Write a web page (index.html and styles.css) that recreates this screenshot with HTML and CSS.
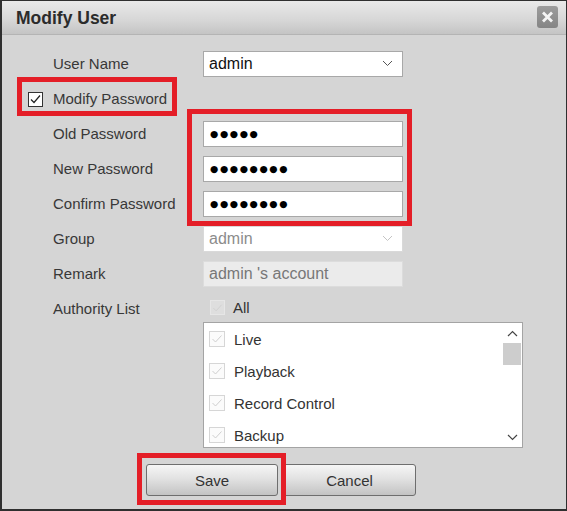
FILE: index.html
```html
<!DOCTYPE html>
<html>
<head>
<meta charset="utf-8">
<link rel="stylesheet" href="styles.css">
</head>
<body>
<div class="frame">
  <div class="dialog">
    <div class="titlebar">
      <span class="title">Modify User</span>
      <span class="close"><svg width="21" height="22" viewBox="0 0 21 22"><path d="M6 6.5 L15 15.5 M15 6.5 L6 15.5" stroke="#f4f4f4" stroke-width="2.8" stroke-linecap="butt"/></svg></span>
    </div>
    <div class="body">
      <div class="form">
        <div class="cbcell"></div>
        <div class="label">User Name</div>
        <div class="field"><div class="input select">admin<svg class="chev" width="11" height="7" viewBox="0 0 11 7"><path d="M1 1 L5.5 5.5 L10 1" fill="none" stroke="#555" stroke-width="1"/></svg></div></div>

        <div class="cbcell"><span class="cb on"><svg width="13" height="13" viewBox="0 0 13 13"><path d="M2 6.5 L5 9.5 L11 2.5" fill="none" stroke="#222" stroke-width="1.2"/></svg></span></div>
        <div class="label">Modify Password</div>
        <div class="field"></div>

        <div class="cbcell"></div>
        <div class="label">Old Password</div>
        <div class="field"><div class="input pw">●●●●●</div></div>

        <div class="cbcell"></div>
        <div class="label">New Password</div>
        <div class="field"><div class="input pw">●●●●●●●●</div></div>

        <div class="cbcell"></div>
        <div class="label">Confirm Password</div>
        <div class="field"><div class="input pw">●●●●●●●●</div></div>

        <div class="cbcell"></div>
        <div class="label">Group</div>
        <div class="field"><div class="input select dis">admin<svg class="chev" width="11" height="7" viewBox="0 0 11 7"><path d="M1 1 L5.5 5.5 L10 1" fill="none" stroke="#c4c4c4" stroke-width="1"/></svg></div></div>

        <div class="cbcell"></div>
        <div class="label">Remark</div>
        <div class="field"><div class="input ro">admin 's account</div></div>

        <div class="cbcell"></div>
        <div class="label auth">Authority List</div>
        <div class="authcell">
          <div class="allrow"><span class="cb dcb"><svg width="14" height="14" viewBox="0 0 14 14"><path d="M2.5 7 L5.5 10 L11.5 3.5" fill="none" stroke="#cfcfcf" stroke-width="1"/></svg></span><span>All</span></div>
          <div class="listbox">
            <div class="items">
              <div class="item"><span class="cb dcb"><svg width="14" height="14" viewBox="0 0 14 14"><path d="M2.5 7 L5.5 10 L11.5 3.5" fill="none" stroke="#cfcfcf" stroke-width="1"/></svg></span>Live</div>
              <div class="item"><span class="cb dcb"><svg width="14" height="14" viewBox="0 0 14 14"><path d="M2.5 7 L5.5 10 L11.5 3.5" fill="none" stroke="#cfcfcf" stroke-width="1"/></svg></span>Playback</div>
              <div class="item"><span class="cb dcb"><svg width="14" height="14" viewBox="0 0 14 14"><path d="M2.5 7 L5.5 10 L11.5 3.5" fill="none" stroke="#cfcfcf" stroke-width="1"/></svg></span>Record Control</div>
              <div class="item"><span class="cb dcb"><svg width="14" height="14" viewBox="0 0 14 14"><path d="M2.5 7 L5.5 10 L11.5 3.5" fill="none" stroke="#cfcfcf" stroke-width="1"/></svg></span>Backup</div>
            </div>
            <div class="scrollbar">
              <div class="arrow"><svg width="11" height="7" viewBox="0 0 11 7"><path d="M1 6 L5.5 1.5 L10 6" fill="none" stroke="#444" stroke-width="1.2"/></svg></div>
              <div class="track"><div class="thumb"></div></div>
              <div class="arrow"><svg width="11" height="7" viewBox="0 0 11 7"><path d="M1 1 L5.5 5.5 L10 1" fill="none" stroke="#444" stroke-width="1.2"/></svg></div>
            </div>
          </div>
        </div>
      </div>
      <div class="buttons">
        <div class="btn">Save</div>
        <div class="btn">Cancel</div>
      </div>
    </div>
    <div class="mark m1"></div>
    <div class="mark m2"></div>
    <div class="mark m3"></div>
  </div>
</div>
</body>
</html>
```
FILE: styles.css
```css
* { box-sizing: border-box; }
html, body { margin: 0; padding: 0; }
body {
  width: 567px;
  height: 511px;
  overflow: hidden;
  font-family: "Liberation Sans", Arial, sans-serif;
  color: #333;
}
.frame {
  width: 567px;
  height: 511px;
  background: #2f2f2f;
  padding: 1px 1px 2px 2px;
}
.dialog {
  position: relative;
  width: 564px;
  height: 508px;
  background: #d5d5d5;
}
.titlebar {
  height: 34px;
  display: flex;
  align-items: center;
  justify-content: space-between;
  padding: 0 8px 0 14px;
  background: linear-gradient(#e9e9e9, #d6d6d6 60%, #c4c4c4);
  border-bottom: 1px solid #b4b4b4;
}
.title {
  font-size: 17.5px;
  font-weight: bold;
  color: #2b2b2b;
  padding-top: 1px;
}
.close {
  width: 21px;
  height: 22px;
  border-radius: 3px;
  background: linear-gradient(#9c9c9c, #858585);
  display: block;
  margin-top: -2px;
}
.close svg { display: block; }
.body {
  padding: 11px 0 0 26px;
}
.form {
  display: grid;
  grid-template-columns: 25px 150px 1fr;
  grid-template-rows: repeat(7, 35px) auto;
}
.cbcell {
  display: flex;
  align-items: center;
}
.label {
  font-size: 15px;
  display: flex;
  align-items: center;
  color: #383838;
}
.label.auth {
  align-items: flex-start;
  line-height: 35px;
  height: 35px;
}
.field {
  display: flex;
  align-items: center;
}
.input {
  width: 200px;
  height: 26px;
  border: 1px solid #a8a8a8;
  background: #fff;
  font-size: 16px;
  color: #111;
  padding: 0 5px;
  display: flex;
  align-items: center;
  justify-content: space-between;
}
.input .chev { margin-right: 4px; }
.input.dis { color: #8c8c8c; border-color: #d9d9d9; }
.input.ro { background: #ebebeb; color: #777; border-color: #dcdcdc; }
.input.pw {
  font-family: "DejaVu Sans", sans-serif;
  font-size: 9.5px;
  letter-spacing: 1.6px;
  color: #000;
  justify-content: flex-start;
  padding-left: 6px;
}
.cb {
  display: inline-flex;
  align-items: center;
  justify-content: center;
  background: #fff;
}
.cb.on {
  width: 15px;
  height: 15px;
  border: 1px solid #333;
  margin-top: 1px;
}
.cb.dcb {
  width: 16px;
  height: 16px;
  border: 1px solid #d6d6d6;
  background: #fbfbfb;
}
.authcell {
  display: flex;
  flex-direction: column;
}
.allrow {
  height: 31px;
  padding: 2px 0 0 7px;
  display: flex;
  align-items: center;
  gap: 8px;
  font-size: 15px;
}
.allrow .cb.dcb { width: 15px; height: 15px; background: #dedede; border-color: #e6e6e6; }
.listbox {
  width: 320px;
  height: 126px;
  border: 1px solid #a4a4a4;
  background: #fff;
  display: flex;
  overflow: hidden;
}
.items {
  flex: 1;
  padding-top: 0;
}
.item {
  height: 32px;
  display: flex;
  align-items: center;
  gap: 9px;
  padding-left: 5px;
  font-size: 15px;
  color: #333;
}
.scrollbar {
  width: 20px;
  display: flex;
  flex-direction: column;
  background: #fff;
}
.arrow {
  height: 20px;
  display: flex;
  align-items: center;
  justify-content: center;
}
.track {
  flex: 1;
}
.thumb {
  height: 22px;
  background: #cdcdcd;
  margin: 0 1px;
}
.buttons {
  display: flex;
  gap: 5px;
  margin-top: 16px;
  padding-left: 118px;
}
.btn {
  height: 32px;
  border: 1px solid #6e6e6e;
  border-radius: 3px;
  background: linear-gradient(#f6f6f6, #e2e2e2 45%, #c3c3c3);
  font-size: 15px;
  color: #333;
  display: flex;
  align-items: center;
  justify-content: center;
}
.btn:first-child { width: 132px; }
.btn:last-child { width: 133px; }
.mark {
  position: absolute;
  border: 5px solid #e41e27;
}
.m1 { left: 15px; top: 76px; width: 160px; height: 39px; }
.m2 { left: 185px; top: 108px; width: 225px; height: 117px; }
.m3 { left: 135px; top: 452px; width: 149px; height: 52px; }
```
